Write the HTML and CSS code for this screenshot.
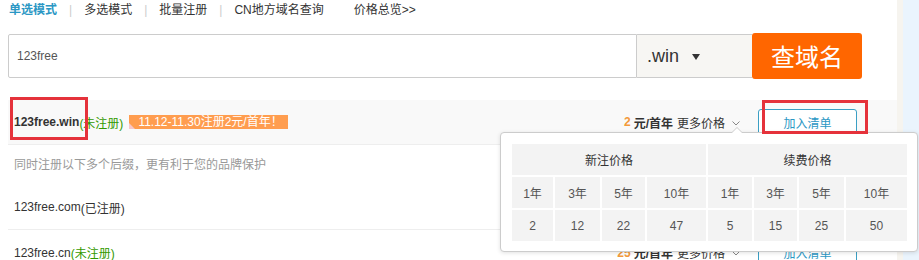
FILE: index.html
```html
<!DOCTYPE html>
<html lang="zh-CN">
<head>
<meta charset="utf-8">
<title>域名查询</title>
<link rel="stylesheet" href="styles.css">
</head>
<body>
<div class="page">
  <div class="main">
    <nav class="tabs">
      <a class="tab active">单选模式</a><span class="sep">|</span>
      <a class="tab">多选模式</a><span class="sep">|</span>
      <a class="tab">批量注册</a><span class="sep">|</span>
      <a class="tab">CN地方域名查询</a>
      <a class="tab overview">价格总览&gt;&gt;</a>
    </nav>
    <div class="search">
      <div class="search-input">123free</div>
      <div class="search-suffix"><span>.win</span><i class="caret"></i></div>
      <button class="search-btn">查域名</button>
    </div>
    <ul class="results">
      <li class="row row-main">
        <span class="dname bold">123free.win</span><span class="status free">(未注册)</span>
        <span class="promo">11.12-11.30注册2元/首年！</span>
        <div class="price">
          <b class="num">2</b><b class="unit">元/首年</b><span class="more">更多价格</span>
          <svg class="chev" width="8" height="5" viewBox="0 0 8 5"><polyline points="0.5,0.5 4,4 7.5,0.5" fill="none" stroke="#888" stroke-width="1"/></svg>
        </div>
        <button class="add">加入清单</button>
      </li>
      <li class="hint">同时注册以下多个后缀，更有利于您的品牌保护</li>
      <li class="row row-line">
        <span class="dname">123free.com</span><span class="status">(已注册)</span>
      </li>
      <li class="row">
        <span class="dname">123free.cn</span><span class="status free">(未注册)</span>
        <div class="price">
          <b class="num">25</b><b class="unit">元/首年</b><span class="more">更多价格</span>
          <svg class="chev" width="8" height="5" viewBox="0 0 8 5"><polyline points="0.5,0.5 4,4 7.5,0.5" fill="none" stroke="#888" stroke-width="1"/></svg>
        </div>
        <button class="add">加入清单</button>
      </li>
    </ul>
  </div>
  <div class="side"><div class="side-beige"></div><div class="side-blue"></div></div>

  <div class="popup">
    <table class="ptable">
      <colgroup>
        <col style="width:41px"><col style="width:45px"><col style="width:43px"><col style="width:59px">
        <col style="width:44px"><col style="width:43px"><col style="width:45px"><col style="width:61px">
      </colgroup>
      <tr class="head"><td colspan="4">新注价格</td><td colspan="4">续费价格</td></tr>
      <tr><td>1年</td><td>3年</td><td>5年</td><td>10年</td><td>1年</td><td>3年</td><td>5年</td><td>10年</td></tr>
      <tr><td>2</td><td>12</td><td>22</td><td>47</td><td>5</td><td>15</td><td>25</td><td>50</td></tr>
    </table>
  </div>

  <div class="mark mark-name"></div>
  <div class="mark mark-btn"></div>
</div>
</body>
</html>
```

FILE: styles.css
```css
* { box-sizing: border-box; }
html, body { margin: 0; padding: 0; background: #fff; }
body {
  font-family: "Liberation Sans", "Noto Sans CJK SC", sans-serif;
  font-size: 12px;
  color: #333;
}
.page {
  position: relative;
  display: flex;
  width: 919px;
  height: 260px;
  overflow: hidden;
}
.main {
  width: 897px;
  padding-left: 8px;
  flex: none;
}
.side { flex: 1; display: flex; }
.side-beige { width: 6px; background: #f6f4ef; }
.side-blue { flex: 1; background: #eaf4fd; }

/* tabs */
.tabs {
  display: flex;
  align-items: center;
  height: 20px;
  line-height: 18px;
  padding-left: 1px;
}
.tab { color: #333; text-decoration: none; }
.tab.active { color: #2b97c4; font-weight: bold; }
.sep { color: #ccc; margin: 0 12px; }
.overview { margin-left: 30px; }

/* search */
.search {
  display: flex;
  align-items: center;
  margin-top: 13px;
  height: 46px;
}
.search-input {
  width: 629px;
  height: 44px;
  border: 1px solid #ccc;
  border-radius: 2px 0 0 2px;
  padding-left: 8px;
  line-height: 42px;
  color: #555;
}
.search-suffix {
  width: 115px;
  height: 44px;
  border-top: 1px solid #ccc;
  border-bottom: 1px solid #ccc;
  background: #f7f6f3;
  display: flex;
  align-items: center;
  padding-left: 10px;
  font-size: 18px;
  color: #333;
}
.caret {
  margin-left: 13px;
  width: 0; height: 0;
  border-left: 4px solid transparent;
  border-right: 4px solid transparent;
  border-top: 6px solid #333;
  margin-top: 2px;
}
.search-btn {
  width: 110px;
  height: 46px;
  border: 0;
  border-radius: 3px;
  background: #ff6600;
  color: #fff;
  font-family: "Noto Sans CJK SC", sans-serif;
  font-size: 24px;
  padding: 0;
  line-height: 46px;
}

/* results */
.results { list-style: none; margin: 21px 0 0; padding: 0; }
.row {
  height: 45px;
  display: flex;
  align-items: center;
  padding: 0 40px 0 6px;
}
.row-main { background: #f9f9f9; border-bottom: 1px solid #eee; }
.row-line { border-bottom: 1px solid #eee; }
.bold { font-weight: bold; }
.dname { color: #333; }
.status { color: #333; }
.status.free { color: #339900; }
.promo {
  position: relative;
  margin-left: 6px;
  height: 14px;
  line-height: 14px;
  padding: 0 5px 0 9px;
  background: #ff9d4f;
  color: #fff;
}
.promo::before {
  content: "";
  position: absolute;
  left: 0; bottom: 0;
  width: 0; height: 0;
  border-left: 6px solid #f7c6c9;
  border-top: 6px solid transparent;
}
.price {
  margin-left: auto;
  display: flex;
  align-items: center;
}
.num { color: #f39a3b; font-weight: bold; margin-right: 3px; }
.unit { font-weight: bold; color: #333; margin-right: 4px; }
.more { color: #333; }
.chev { margin-left: 7px; margin-top: 2px; }
.add {
  margin-left: 18px;
  width: 99px;
  height: 26px;
  border: 1px solid #3b9fc4;
  border-radius: 3px;
  background: #fff;
  color: #2b97c4;
  font-family: "Liberation Sans", "Noto Sans CJK SC", sans-serif;
  font-size: 12px;
  padding: 0;
}
.hint {
  height: 40px;
  line-height: 40px;
  padding-left: 6px;
  color: #999;
}

/* price popup */
.popup {
  position: absolute;
  left: 500px;
  top: 132px;
  width: 418px;
  height: 120px;
  border: 1px solid #ccc;
  border-radius: 4px;
  background: #fff;
  box-shadow: 0 1px 4px rgba(0,0,0,0.12);
  padding: 9px 0 0 9px;
}
.popup::before,
.popup::after {
  content: "";
  position: absolute;
  width: 0; height: 0;
  border-left: 6px solid transparent;
  border-right: 6px solid transparent;
}
.popup::before { left: 230px; top: -6px; border-bottom: 6px solid #ccc; }
.popup::after { left: 231px; top: -5px; border-left-width: 5px; border-right-width: 5px; border-bottom: 5px solid #fff; }
.ptable {
  border-collapse: separate;
  border-spacing: 2px;
  table-layout: fixed;
}
.ptable td {
  background: #f3f3f3;
  height: 31px;
  padding: 0;
  text-align: center;
  color: #555;
}
.ptable .head td { color: #333; }

/* annotation marks */
.mark {
  position: absolute;
  border: 3px solid #e5323b;
}
.mark-name { left: 10px; top: 97px; width: 78px; height: 43px; }
.mark-btn { left: 762px; top: 100px; width: 106px; height: 34px; }
```
